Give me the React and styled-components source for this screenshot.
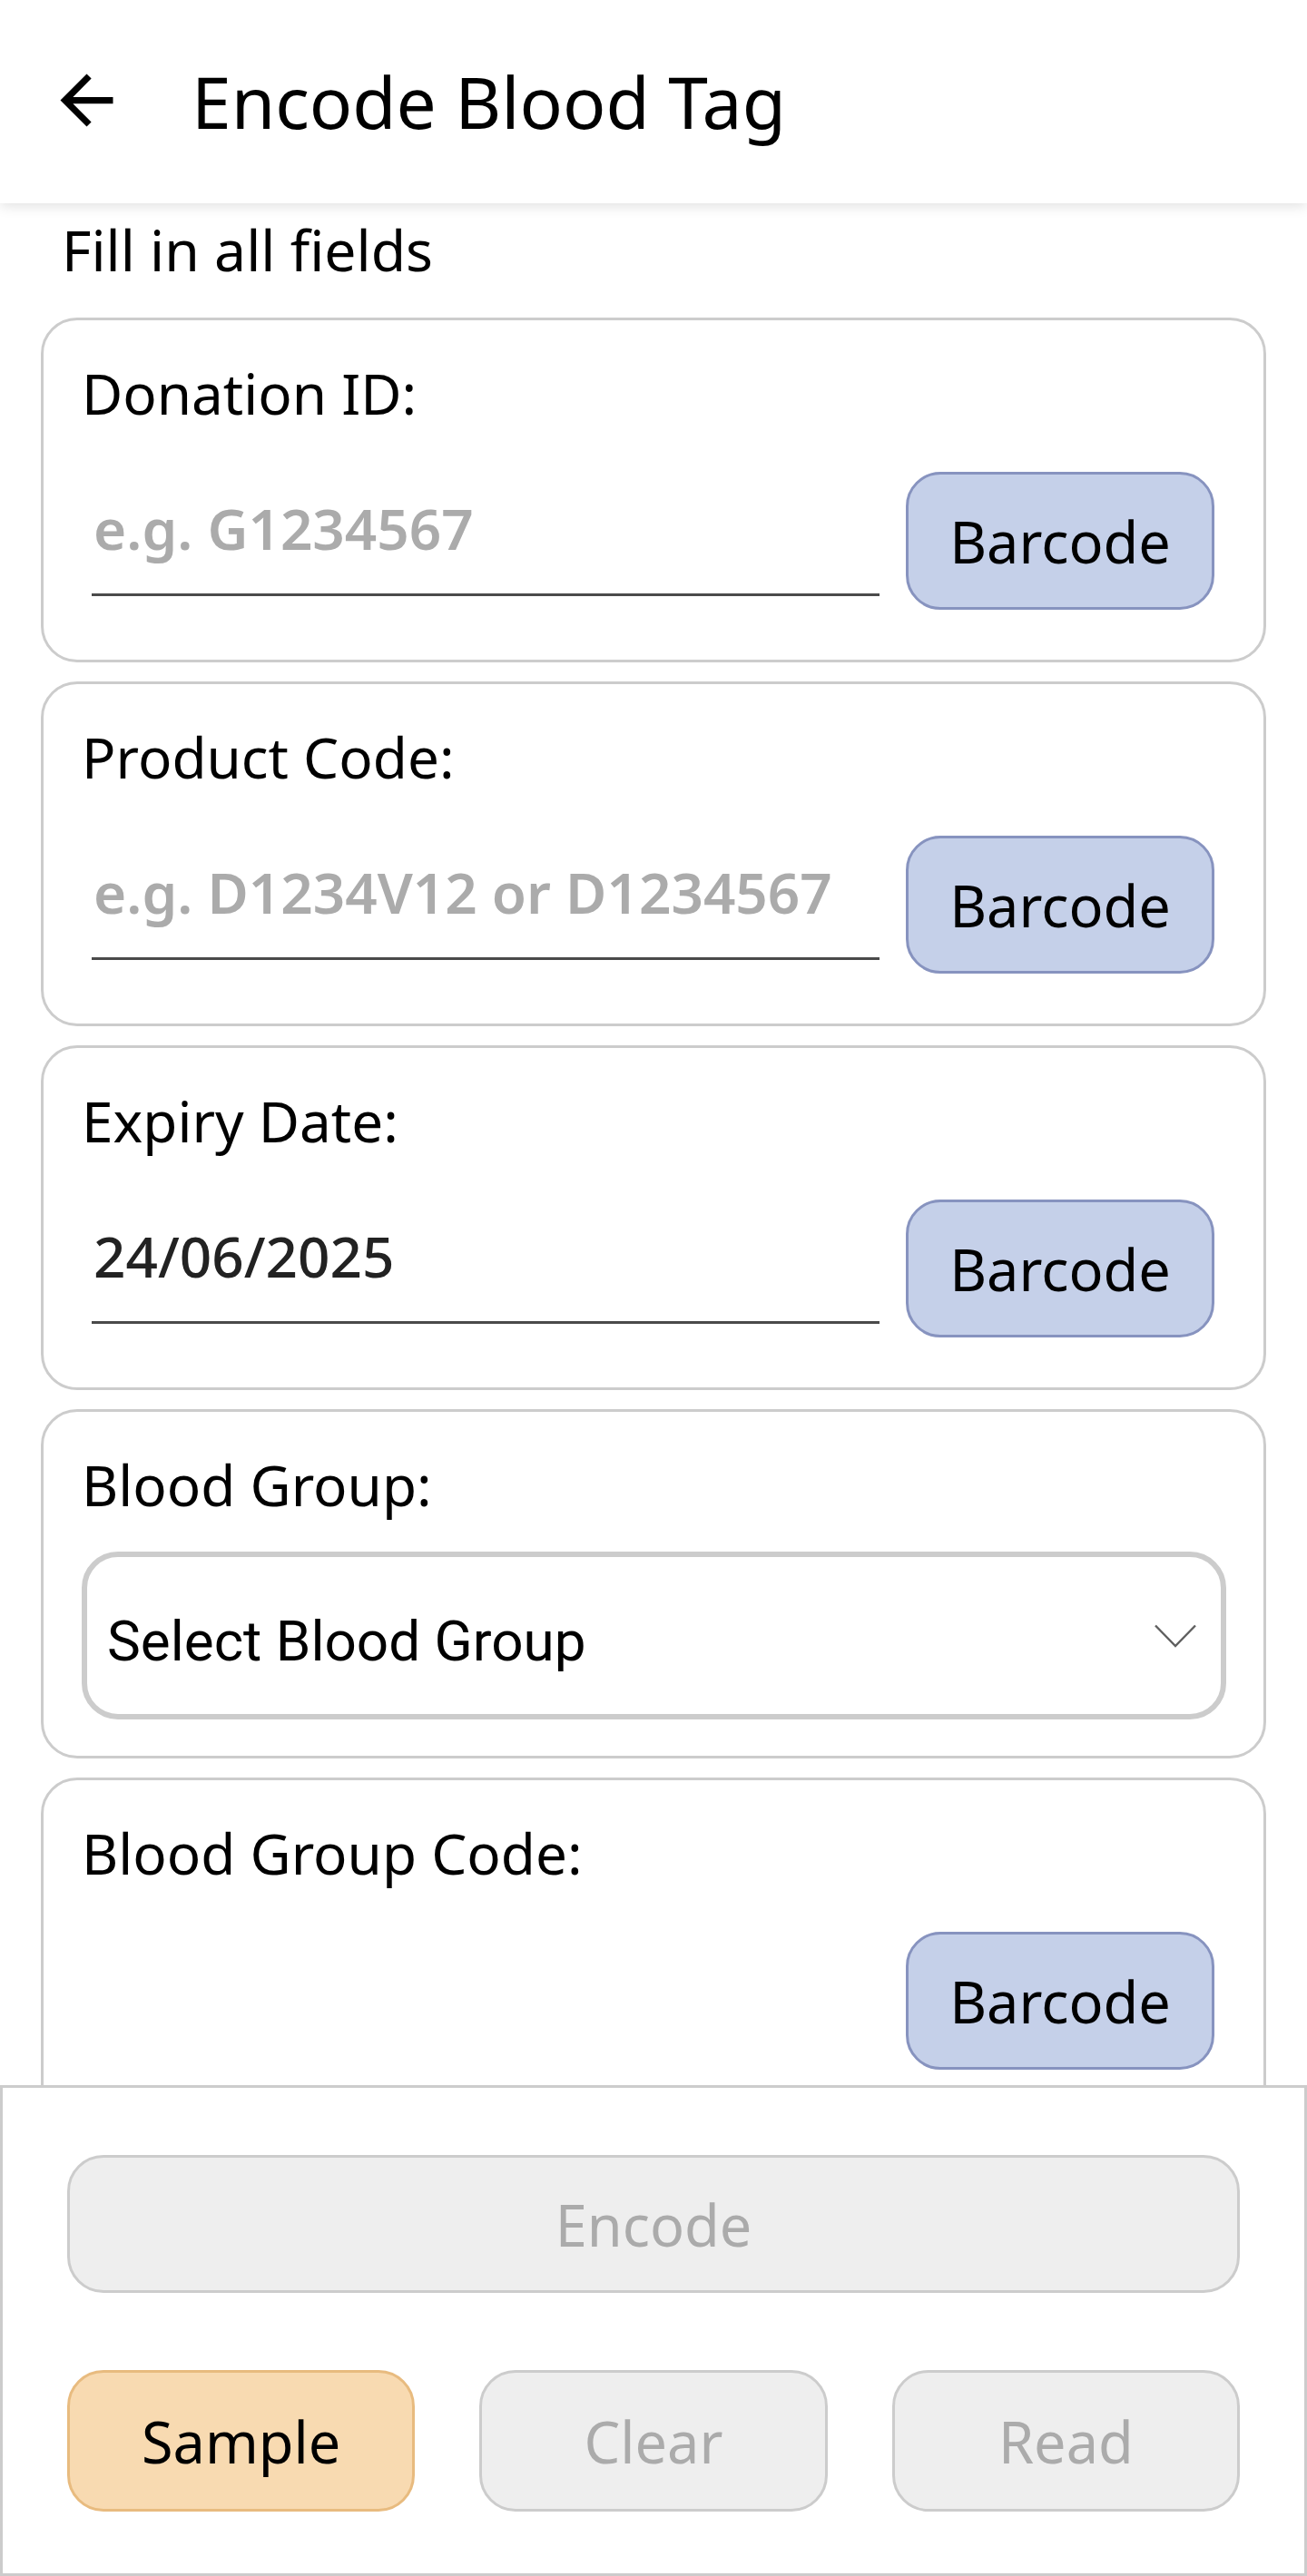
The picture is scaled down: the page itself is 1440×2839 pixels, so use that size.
import React from "react";
import styled, { createGlobalStyle } from "styled-components";

const Global = createGlobalStyle`
  html, body { margin: 0; padding: 0; background: #ffffff; }
  body { font-family: "Noto Sans", "Open Sans", sans-serif; color: #000; }
  * { box-sizing: border-box; }
`;

const Page = styled.div`
  height: 2839px;
  display: flex;
  flex-direction: column;
  overflow: hidden;
  background: #fff;
`;

const Header = styled.header`
  position: relative;
  z-index: 2;
  height: 224px;
  flex: none;
  display: flex;
  align-items: center;
  background: #fff;
  box-shadow: 0 3px 14px rgba(0, 0, 0, 0.12);
`;

const BackButton = styled.button`
  width: 87px;
  height: 87px;
  margin-left: 52px;
  margin-top: -4px;
  padding: 0;
  border: none;
  background: transparent;
  display: flex;
  align-items: center;
  justify-content: center;
  svg { width: 87px; height: 87px; display: block; }
`;

const Title = styled.h1`
  margin: 0 0 0 72px;
  font-size: 78.5px;
  font-weight: 400;
  line-height: 1;
  color: #000;
`;

const Content = styled.main`
  flex: 1;
  min-height: 0;
  overflow: hidden;
  padding: 9px 45px 0 45px;
  display: flex;
  flex-direction: column;
`;

const Hint = styled.p`
  margin: 0 0 33px 23px;
  font-size: 62.5px;
  line-height: 84px;
`;

const Cards = styled.div`
  display: flex;
  flex-direction: column;
  gap: 21px;
`;

const Card = styled.section`
  flex: none;
  border: 3px solid #cccccc;
  border-radius: 40px;
  padding: 38px 41px ${(p) => (p.$tall ? "40px" : "55px")} 42px;
  background: #fff;
`;

const Label = styled.div`
  font-size: 62px;
  line-height: 84px;
  color: #000;
`;

const FieldRow = styled.div`
  display: flex;
  align-items: flex-start;
  gap: 29px;
  margin-top: 45px;
  padding: 0 13px 0 11px;
`;

const TextInput = styled.input`
  flex: 1;
  min-width: 0;
  margin-top: 20px;
  height: 117px;
  padding: 0 0 30px 2px;
  border: none;
  border-bottom: ${(p) => (p.$hidden ? "3px solid transparent" : "3px solid #4a4a4a")};
  background: transparent;
  outline: none;
  font-family: "Noto Sans", "Open Sans", sans-serif;
  font-size: 62px;
  line-height: 84px;
  font-weight: 500;
  color: #222222;
  &::placeholder { color: #ababab; opacity: 1; font-weight: 600; }
`;

const BarcodeButton = styled.button`
  flex: none;
  width: 340px;
  height: 152px;
  border: 3px solid #8793bf;
  border-radius: 38px;
  background: #c5d0e9;
  font-family: "Noto Sans", "Open Sans", sans-serif;
  font-size: 63px;
  color: #000;
  padding: 0;
`;

const Select = styled.div`
  margin-top: 32px;
  height: 185px;
  border: 6px solid #cccccc;
  border-radius: 40px;
  display: flex;
  align-items: center;
  justify-content: space-between;
  padding: 12px 27px 0 22px;
  font-family: Roboto, "Noto Sans", sans-serif;
  font-size: 62px;
  color: #000;
  svg { width: 46px; height: 26px; display: block; margin-top: -12px; }
`;

const BottomBar = styled.footer`
  position: relative;
  z-index: 2;
  flex: none;
  height: 541px;
  background: #fff;
  border: 3px solid #cccccc;
  padding: 74px 71px 68px 71px;
  display: flex;
  flex-direction: column;
  gap: 85px;
`;

const ActionButton = styled.button`
  height: ${(p) => (p.$wide ? "152px" : "156px")};
  width: 100%;
  border-radius: 40px;
  border: 3px solid ${(p) => (p.$accent ? "#e8bb7f" : "#cccccc")};
  background: ${(p) => (p.$accent ? "#f8dab1" : "#eeeeee")};
  color: ${(p) => (p.$accent ? "#000000" : "#ababab")};
  font-family: "Noto Sans", "Open Sans", sans-serif;
  font-size: 63px;
  padding: 0;
`;

const ButtonRow = styled.div`
  display: grid;
  grid-template-columns: repeat(3, 1fr);
  gap: 71px;
`;

const ArrowBack = () => (
  <svg viewBox="0 0 24 24" fill="#000">
    <path d="M20 11H7.83l5.59-5.59L12 4l-8 8 8 8 1.41-1.41L7.83 13H20v-2z" />
  </svg>
);

const Chevron = () => (
  <svg viewBox="0 0 46 26" fill="none" stroke="#5f5f5f" strokeWidth="2.4">
    <polyline points="1,1.5 23,24 45,1.5" />
  </svg>
);

const fields = [
  { label: "Donation ID:", placeholder: "e.g. G1234567" },
  { label: "Product Code:", placeholder: "e.g. D1234V12 or D1234567" },
  { label: "Expiry Date:", value: "24/06/2025" },
];

export default function App() {
  return (
    <>
      <Global />
      <Page>
        <Header>
          <BackButton aria-label="Back">
            <ArrowBack />
          </BackButton>
          <Title>Encode Blood Tag</Title>
        </Header>
        <Content>
          <Hint>Fill in all fields</Hint>
          <Cards>
            {fields.map((f) => (
              <Card key={f.label}>
                <Label>{f.label}</Label>
                <FieldRow>
                  <TextInput placeholder={f.placeholder} defaultValue={f.value} />
                  <BarcodeButton>Barcode</BarcodeButton>
                </FieldRow>
              </Card>
            ))}
            <Card $tall>
              <Label>Blood Group:</Label>
              <Select>
                <span>Select Blood Group</span>
                <Chevron />
              </Select>
            </Card>
            <Card>
              <Label>Blood Group Code:</Label>
              <FieldRow>
                <TextInput $hidden readOnly />
                <BarcodeButton>Barcode</BarcodeButton>
              </FieldRow>
            </Card>
          </Cards>
        </Content>
        <BottomBar>
          <ActionButton $wide>Encode</ActionButton>
          <ButtonRow>
            <ActionButton $accent>Sample</ActionButton>
            <ActionButton>Clear</ActionButton>
            <ActionButton>Read</ActionButton>
          </ButtonRow>
        </BottomBar>
      </Page>
    </>
  );
}
